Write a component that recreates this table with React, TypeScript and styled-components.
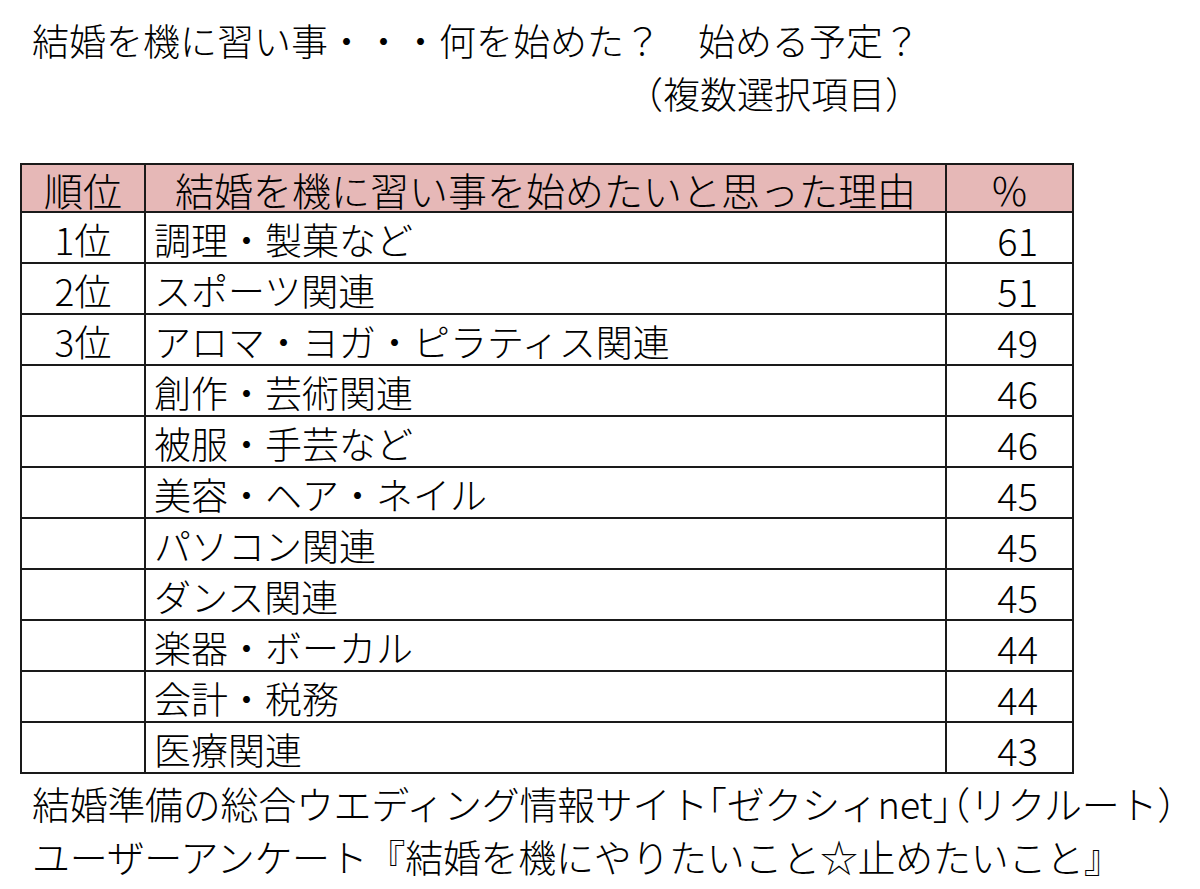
import React from "react";
import styled, { createGlobalStyle } from "styled-components";

const Global = createGlobalStyle`
  html, body {
    margin: 0;
    padding: 0;
    background: #ffffff;
  }
  body {
    font-family: "Noto Sans CJK JP", "Noto Sans", sans-serif;
    color: #000000;
  }
`;

const Page = styled.div`
  width: 1200px;
  height: 889px;
  box-sizing: border-box;
  padding: 13px 0 0 0;
  overflow: hidden;
  background: #ffffff;
`;

const Heading = styled.h1`
  margin: 0;
  padding-left: 32px;
  font-size: 37px;
  font-weight: 300;
  line-height: 54px;
  white-space: nowrap;
  color: #000;
`;

const SubHeading = styled.div`
  padding-left: 626px;
  font-size: 37px;
  font-weight: 300;
  line-height: 52px;
  white-space: nowrap;
  color: #000;
`;

const Table = styled.table`
  margin: 44px 0 0 20px;
  border-collapse: collapse;
  table-layout: fixed;
  width: 1054px;
  border: 2px solid #1a1a1a;
`;

const Cell = styled.td<{ $align?: "left" | "center" | "right" }>`
  border: 2px solid #1a1a1a;
  height: 47px;
  padding: 2px ${(p) => (p.$align === "right" ? "34px" : "8px")} 0 8px;
  text-align: ${(p) => p.$align ?? "left"};
  vertical-align: bottom;
  font-size: ${(p) => (p.$align === "right" ? "38px" : "37px")};
  font-weight: 300;
  line-height: 45px;
  white-space: nowrap;
  color: #000;
`;

const HeadCell = styled.th`
  border: 2px solid #1a1a1a;
  height: 46px;
  padding: 0;
  background: #e6b8b7;
  text-align: center;
  vertical-align: bottom;
  font-size: 39px;
  font-weight: 300;
  line-height: 44px;
  white-space: nowrap;
  color: #000;
`;

const Footer = styled.div`
  padding-left: 32px;
  margin-top: 2px;
`;

const FooterLine = styled.div<{ $halt?: boolean }>`
  font-size: 38px;
  font-weight: 300;
  line-height: 53px;
  letter-spacing: -0.3px;
  white-space: nowrap;
  color: #000;
  font-feature-settings: ${(p) => (p.$halt ? '"halt" 1' : "normal")};
`;

type Row = { rank: string; reason: string; pct: number };

const rows: Row[] = [
  { rank: "1位", reason: "調理・製菓など", pct: 61 },
  { rank: "2位", reason: "スポーツ関連", pct: 51 },
  { rank: "3位", reason: "アロマ・ヨガ・ピラティス関連", pct: 49 },
  { rank: "", reason: "創作・芸術関連", pct: 46 },
  { rank: "", reason: "被服・手芸など", pct: 46 },
  { rank: "", reason: "美容・ヘア・ネイル", pct: 45 },
  { rank: "", reason: "パソコン関連", pct: 45 },
  { rank: "", reason: "ダンス関連", pct: 45 },
  { rank: "", reason: "楽器・ボーカル", pct: 44 },
  { rank: "", reason: "会計・税務", pct: 44 },
  { rank: "", reason: "医療関連", pct: 43 },
];

export default function App() {
  return (
    <Page>
      <Global />
      <Heading>結婚を機に習い事・・・何を始めた？　始める予定？</Heading>
      <SubHeading>（複数選択項目）</SubHeading>
      <Table>
        <colgroup>
          <col style={{ width: 124 }} />
          <col style={{ width: 801 }} />
          <col style={{ width: 127 }} />
        </colgroup>
        <thead>
          <tr>
            <HeadCell>順位</HeadCell>
            <HeadCell>結婚を機に習い事を始めたいと思った理由</HeadCell>
            <HeadCell>％</HeadCell>
          </tr>
        </thead>
        <tbody>
          {rows.map((r, i) => (
            <tr key={i}>
              <Cell $align="center">{r.rank}</Cell>
              <Cell>{r.reason}</Cell>
              <Cell $align="right">{r.pct}</Cell>
            </tr>
          ))}
        </tbody>
      </Table>
      <Footer>
        <FooterLine $halt>
          結婚準備の総合ウエディング情報サイト「ゼクシィnet」（リクルート）
        </FooterLine>
        <FooterLine>ユーザーアンケート『結婚を機にやりたいこと☆止めたいこと』</FooterLine>
      </Footer>
    </Page>
  );
}
